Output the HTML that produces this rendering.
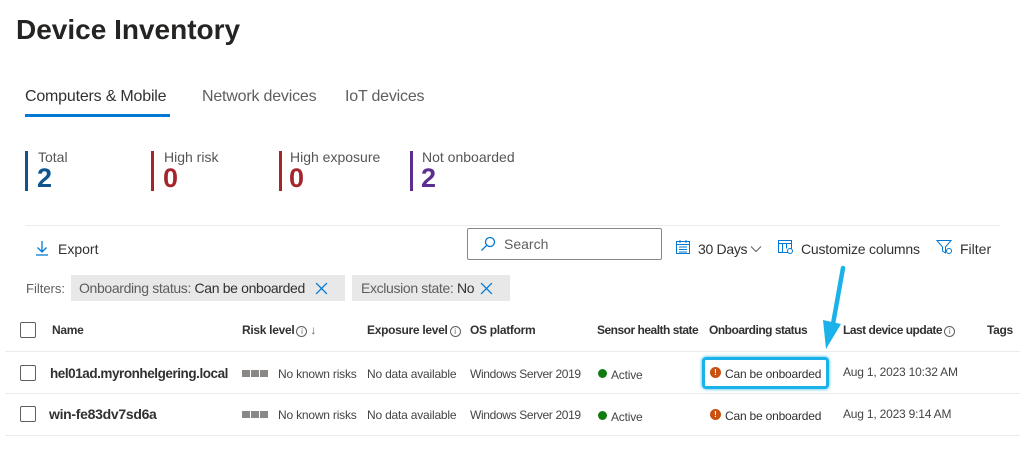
<!DOCTYPE html>
<html><head><meta charset="utf-8"><style>
*{margin:0;padding:0;box-sizing:border-box}
body{width:1024px;height:466px;background:#fff;font-family:"Liberation Sans",sans-serif;color:#323130;position:relative;overflow:hidden}
.a{position:absolute;white-space:nowrap;line-height:16px}
.h{font-size:12px;font-weight:bold;color:#323130;letter-spacing:-0.3px;top:322px}
.c{font-size:12px;color:#444;letter-spacing:-0.2px}
.cb{width:16px;height:16px;border:1px solid #605e5c;border-radius:2px;position:absolute}
.line{position:absolute;height:1px;background:#edebe9}
.bar{position:absolute;width:3px;height:40px}
.bars{position:absolute;width:8px;height:7px;background:#8a8886}
.inf{display:inline-block;width:11px;height:11px;border:1px solid #605e5c;border-radius:50%;font-size:8px;line-height:9px;text-align:center;font-weight:normal;color:#605e5c;vertical-align:0px;margin-left:2px}
.lbl{font-size:14px;color:#555}
.num{font-size:27px;font-weight:bold;line-height:30px}
</style></head><body>
<div class="a" style="left:16px;top:14px;font-size:28px;line-height:32px;font-weight:bold;color:#252423">Device Inventory</div>
<div class="a" style="left:25px;top:89px;font-size:16px;color:#323130;letter-spacing:-0.2px">Computers &amp; Mobile</div>
<div style="position:absolute;left:25px;top:114px;width:145px;height:3px;background:#0078d4"></div>
<div class="a" style="left:202px;top:89px;font-size:16px;color:#605e5c;letter-spacing:-0.2px">Network devices</div>
<div class="a" style="left:345px;top:89px;font-size:16px;color:#605e5c;letter-spacing:-0.2px">IoT devices</div>

<div class="bar" style="left:25px;top:151px;background:#0f548c"></div>
<div class="a lbl" style="left:38px;top:149px">Total</div>
<div class="a num" style="left:37px;top:163px;color:#0f548c">2</div>
<div class="bar" style="left:151px;top:151px;background:#a4262c"></div>
<div class="a lbl" style="left:164px;top:149px">High risk</div>
<div class="a num" style="left:163px;top:163px;color:#a4262c">0</div>
<div class="bar" style="left:279px;top:151px;background:#a4262c"></div>
<div class="a lbl" style="left:290px;top:149px">High exposure</div>
<div class="a num" style="left:289px;top:163px;color:#a4262c">0</div>
<div class="bar" style="left:410px;top:151px;background:#5c2e91"></div>
<div class="a lbl" style="left:422px;top:149px">Not onboarded</div>
<div class="a num" style="left:421px;top:163px;color:#5c2e91">2</div>

<div class="line" style="left:25px;top:225px;width:975px"></div>
<svg class="a" style="left:35px;top:240px" width="14" height="16" viewBox="0 0 14 16"><path d="M7 1v11M2.5 7.5 7 12l4.5-4.5M1 15h12" stroke="#0078d4" stroke-width="1.3" fill="none"/></svg>
<div class="a" style="left:58px;top:241px;font-size:14px;color:#323130">Export</div>

<div style="position:absolute;left:467px;top:228px;width:195px;height:32px;border:1px solid #8a8886;border-radius:2px"></div>
<svg class="a" style="left:480px;top:236px" width="16" height="16" viewBox="0 0 16 16"><circle cx="10" cy="6" r="4.5" stroke="#0078d4" stroke-width="1.3" fill="none"/><path d="M6.8 9.2 1.5 14.5" stroke="#0078d4" stroke-width="1.3"/></svg>
<div class="a" style="left:504px;top:236px;font-size:14px;color:#605e5c">Search</div>

<svg class="a" style="left:675px;top:239px" width="16" height="16" viewBox="0 0 16 16"><rect x="1.5" y="2.5" width="13" height="12" stroke="#0078d4" fill="none"/><path d="M1.5 5.5h13M4 8h8M4 10.5h8M4 13h8M5 1v3M11 1v3" stroke="#0078d4" stroke-width="1"/></svg>
<div class="a" style="left:698px;top:241px;font-size:14px;color:#323130;letter-spacing:-0.3px">30 Days</div>
<svg class="a" style="left:750px;top:245px" width="12" height="8" viewBox="0 0 12 8"><path d="M1 1.5 6 6.5 11 1.5" stroke="#605e5c" fill="none"/></svg>
<svg class="a" style="left:777px;top:239px" width="18" height="16" viewBox="0 0 18 16"><rect x="1.5" y="1.5" width="13" height="12" stroke="#0078d4" fill="none"/><path d="M1.5 4.5h13M5.5 4.5v9M9.5 4.5v5" stroke="#0078d4"/><circle cx="13" cy="12" r="2.5" fill="#fff" stroke="#0078d4"/></svg>
<div class="a" style="left:801px;top:241px;font-size:14px;color:#323130;letter-spacing:-0.2px">Customize columns</div>
<svg class="a" style="left:936px;top:239px" width="18" height="16" viewBox="0 0 18 16"><path d="M1 1.5h14L9.5 8v6l-3-2V8z" stroke="#0078d4" fill="none"/><circle cx="13" cy="12" r="2.5" fill="#fff" stroke="#0078d4"/></svg>
<div class="a" style="left:960px;top:241px;font-size:14px;color:#323130">Filter</div>

<div class="a" style="left:26px;top:281px;font-size:13px;color:#605e5c">Filters:</div>
<div style="position:absolute;left:71px;top:275px;width:274px;height:26px;background:#e8e8e8"></div>
<div class="a" style="left:79px;top:280px;font-size:14px;color:#605e5c;letter-spacing:-0.35px">Onboarding status: <span style="color:#323130">Can be onboarded</span></div>
<svg class="a" style="left:315px;top:282px" width="13" height="13" viewBox="0 0 12 12"><path d="M1 1l10 10M11 1 1 11" stroke="#0078d4" stroke-width="1.2"/></svg>
<div style="position:absolute;left:352px;top:275px;width:158px;height:26px;background:#e8e8e8"></div>
<div class="a" style="left:361px;top:280px;font-size:14px;color:#605e5c;letter-spacing:-0.35px">Exclusion state: <span style="color:#323130">No</span></div>
<svg class="a" style="left:480px;top:282px" width="13" height="13" viewBox="0 0 12 12"><path d="M1 1l10 10M11 1 1 11" stroke="#0078d4" stroke-width="1.2"/></svg>

<div class="cb" style="left:20px;top:322px"></div>
<div class="a h" style="left:52px">Name</div>
<div class="a h" style="left:242px">Risk level<span class="inf">i</span> <span style="font-weight:normal;color:#605e5c">↓</span></div>
<div class="a h" style="left:367px">Exposure level<span class="inf">i</span></div>
<div class="a h" style="left:470px">OS platform</div>
<div class="a h" style="left:597px;letter-spacing:-0.5px">Sensor health state</div>
<div class="a h" style="left:709px;letter-spacing:-0.5px">Onboarding status</div>
<div class="a h" style="left:843px;letter-spacing:-0.5px">Last device update<span class="inf">i</span></div>
<div class="a h" style="left:987px">Tags</div>

<div class="line" style="left:5px;top:351px;width:1015px"></div>
<div class="cb" style="left:20px;top:365px"></div>
<div class="a" style="left:50px;top:366px;font-size:13.5px;font-weight:bold;color:#323130;letter-spacing:-0.45px">hel01ad.myronhelgering.local</div>
<span class="bars" style="left:242px;top:370px"></span><span class="bars" style="left:251px;top:370px"></span><span class="bars" style="left:260px;top:370px"></span>
<div class="a c" style="left:278px;top:366px">No known risks</div>
<div class="a c" style="left:367px;top:366px">No data available</div>
<div class="a c" style="left:470px;top:366px;letter-spacing:-0.35px">Windows Server 2019</div>
<div style="position:absolute;left:598px;top:369px;width:9px;height:9px;border-radius:50%;background:#107c10"></div>
<div class="a c" style="left:611px;top:367px">Active</div>
<div style="position:absolute;left:702px;top:357px;width:127px;height:32px;border:3px solid #1ab2e8;border-radius:4px;box-shadow:0 0 3px #1ab2e8"></div>
<div style="position:absolute;left:710px;top:367px;width:11px;height:11px;border-radius:50%;background:#ca5010;color:#fff;font-size:8px;font-weight:bold;text-align:center;line-height:11px">!</div>
<div class="a c" style="left:725px;top:366px;color:#323130">Can be onboarded</div>
<div class="a c" style="left:843px;top:364px">Aug 1, 2023 10:32 AM</div>

<div class="line" style="left:5px;top:393px;width:1015px"></div>
<div class="cb" style="left:20px;top:406px"></div>
<div class="a" style="left:49px;top:406px;font-size:14px;font-weight:bold;color:#323130;letter-spacing:-0.3px">win-fe83dv7sd6a</div>
<span class="bars" style="left:242px;top:411px"></span><span class="bars" style="left:251px;top:411px"></span><span class="bars" style="left:260px;top:411px"></span>
<div class="a c" style="left:278px;top:407px">No known risks</div>
<div class="a c" style="left:367px;top:407px">No data available</div>
<div class="a c" style="left:470px;top:407px;letter-spacing:-0.35px">Windows Server 2019</div>
<div style="position:absolute;left:598px;top:411px;width:9px;height:9px;border-radius:50%;background:#107c10"></div>
<div class="a c" style="left:611px;top:409px">Active</div>
<div style="position:absolute;left:710px;top:409px;width:11px;height:11px;border-radius:50%;background:#ca5010;color:#fff;font-size:8px;font-weight:bold;text-align:center;line-height:11px">!</div>
<div class="a c" style="left:725px;top:408px;color:#323130">Can be onboarded</div>
<div class="a c" style="left:843px;top:406px">Aug 1, 2023 9:14 AM</div>
<div class="line" style="left:5px;top:435px;width:1015px"></div>

<svg class="a" style="left:812px;top:262px" width="45" height="92" viewBox="0 0 45 92"><path d="M31 6 21 62" stroke="#1ab2e8" stroke-width="4.5" stroke-linecap="round"/><path d="M11 58 14 87 29 62z" fill="#1ab2e8"/></svg>
</body></html>
